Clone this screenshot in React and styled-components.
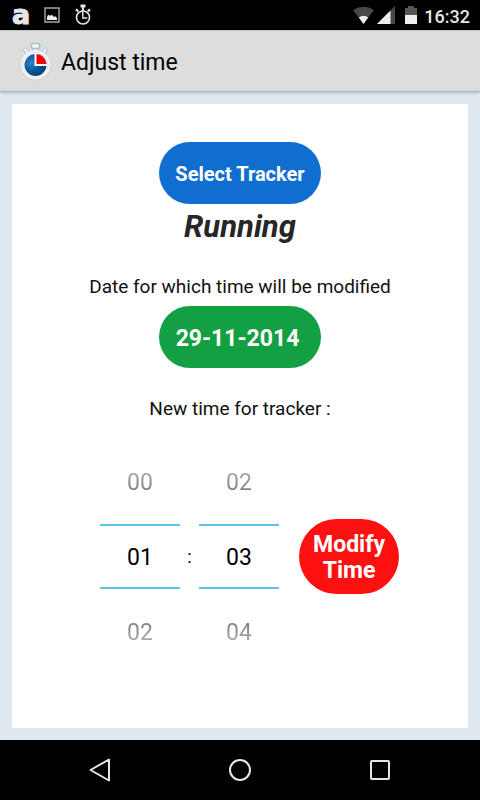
import React, { useState } from "react";
import styled, { createGlobalStyle } from "styled-components";

const GlobalStyle = createGlobalStyle`
  *, *::before, *::after { box-sizing: border-box; }
  body {
    margin: 0;
    font-family: Roboto, "Liberation Sans", sans-serif;
    color: #000;
    background: #deeaef;
  }
  button, input { font: inherit; color: inherit; margin: 0; padding: 0; border: 0; background: none; }
  button { cursor: pointer; }
  p, h1, h2 { margin: 0; }
`;

const Screen = styled.div`
  display: flex;
  flex-direction: column;
  min-height: 100vh;
  background: #deeaef;
`;

const StatusBar = styled.div`
  display: flex;
  align-items: center;
  justify-content: space-between;
  height: 30px;
  padding: 0 10px 0 12px;
  background: #000;
  color: #e6e6e6;
`;

const StatusGroup = styled.div`
  display: flex;
  align-items: center;
  svg { display: block; }
`;

const Notifications = styled(StatusGroup)`
  gap: 14px;
`;

const NotificationMark = styled.span`
  font: bold 27px/30px "DejaVu Sans", sans-serif;
  -webkit-text-stroke: 1px #e6e6e6;
`;

const Clock = styled.time`
  margin-left: 6px;
  padding-top: 3px;
  font-size: 18px;
  line-height: 24px;
  font-weight: 500;
`;

const AppBar = styled.header`
  display: flex;
  align-items: center;
  gap: 8px;
  height: 62px;
  padding: 2px 17px 0;
  background: #ddd;
  border-top: 1px solid #c4c4c4;
  border-bottom: 1px solid #b0b2b3;
  box-shadow: 0 1px 3px rgba(0, 0, 0, 0.2);
  svg { display: block; }
`;

const Title = styled.h1`
  padding-top: 2px;
  font-size: 23px;
  line-height: 28px;
  font-weight: 400;
`;

const Content = styled.main`
  display: flex;
  flex: 1;
  padding: 12px;
`;

const Card = styled.section`
  display: flex;
  flex: 1;
  flex-direction: column;
  align-items: center;
  padding: 38px 12px;
  background: #fff;
`;

const tones = { blue: "#106ed0", green: "#12a042", red: "#ff1010" };

const PillButton = styled.button`
  min-width: ${(p) => (p.$compact ? 100 : 162)}px;
  min-height: ${(p) => (p.$compact ? 75 : 62)}px;
  padding: ${(p) => (p.$date ? "4px 5px 0 0" : "2px 0 0")};
  border-radius: 38px;
  background: ${(p) => tones[p.$tone]};
  color: #fff;
  font-size: ${(p) => (p.$compact || p.$date ? 23 : 20)}px;
  line-height: 26px;
  font-weight: 700;
`;

const TrackerName = styled.h2`
  padding-top: 1px;
  margin-bottom: 26px;
  color: #262626;
  font-size: 31px;
  line-height: 44px;
  font-weight: 700;
  font-style: italic;
`;

const Label = styled.p`
  padding-bottom: 7px;
  color: #111;
  font-size: 19px;
  line-height: 24px;
  text-align: center;
`;

const TimeLabel = styled(Label)`
  margin-top: 29px;
`;

const TimeRow = styled.div`
  display: flex;
  align-items: center;
  margin-top: 16px;
  margin-left: 19px;
`;

const Picker = styled.div`
  display: flex;
  flex-direction: column;
  width: 80px;
  font-size: 23px;
  line-height: 28px;
  text-align: center;
`;

const PickerStep = styled.button`
  height: 80px;
  color: transparent;
  background: linear-gradient(${(p) => (p.$up ? "#aaa 35%, #737373 65%" : "#737373 35%, #aaa 65%")});
  background-clip: text;
  padding: ${(p) => (p.$up ? "0 0 2px" : "8px 0 0")};
`;

const PickerValue = styled.input`
  width: 100%;
  height: 65px;
  padding-top: 2px;
  border-top: 2px solid #5cc4ec;
  border-bottom: 2px solid #5cc4ec;
  border-radius: 0;
  text-align: center;
  outline: none;
`;

const Colon = styled.span`
  width: 19px;
  font-size: 18px;
  text-align: center;
`;

const ModifySlot = styled.div`
  margin-left: 20px;
`;

const NavBar = styled.nav`
  display: flex;
  justify-content: center;
  height: 60px;
  background: #000;
`;

const NavButton = styled.button`
  display: grid;
  place-items: center;
  width: 140px;
`;

const pad = (n) => String(n).padStart(2, "0");

function TimePicker({ label, value, max, onChange }) {
  const wrap = (n) => (n + max) % max;
  return (
    <Picker role="group" aria-label={label}>
      <PickerStep $up onClick={() => onChange(wrap(value - 1))}>{pad(wrap(value - 1))}</PickerStep>
      <PickerValue
        aria-label={label}
        inputMode="numeric"
        value={pad(value)}
        onChange={(e) => onChange(wrap(Number(e.target.value.replace(/\D/g, "").slice(-2))))}
      />
      <PickerStep onClick={() => onChange(wrap(value + 1))}>{pad(wrap(value + 1))}</PickerStep>
    </Picker>
  );
}

function PictureIcon() {
  return (
    <svg width="16" height="16" viewBox="0 0 16 16" aria-hidden="true">
      <path d="M1 1h14v14H1z" fill="none" stroke="#a8a8a8" strokeWidth="1.4" />
      <path d="M3 13V10l1-2h1l1 1 1-1h1l2 2 1-1 2 2v2z" fill="#eee" />
    </svg>
  );
}

function StopwatchIcon() {
  return (
    <svg width="18" height="22" viewBox="0 0 18 22" fill="none" stroke="#e6e6e6" aria-hidden="true">
      <circle cx="9" cy="13.5" r="6.5" strokeWidth="1.6" />
      <path d="M6.5 2h5" strokeWidth="3" />
      <path d="M9 3v4" strokeWidth="2" />
      <path d="M2 5.2l2.2 2.4M16 5.2l-2.2 2.4" strokeWidth="2.2" />
      <path d="M8.8 8v6h4.5" strokeWidth="1.4" />
    </svg>
  );
}

function SignalIcons() {
  return (
    <svg width="65" height="20" viewBox="0 0 65 20" aria-hidden="true">
      <path d="M0 5Q10.500-1.500 21 5L10.500 19z" fill="#484848" />
      <path d="M5.800 12.500Q10.500 9 15.200 12.500L10.500 19z" fill="#eee" />
      <path d="M24 19L42 1v18z" fill="#484848" />
      <path d="M24 19L37.500 5.500V19z" fill="#eee" />
      <path d="M52 3h3V1h6v2h3v16H52z" fill="#555" />
      <path d="M52 10h12v9H52z" fill="#eee" />
    </svg>
  );
}

function AppIcon() {
  return (
    <svg width="36" height="40" viewBox="0 0 36 40" aria-hidden="true">
      <defs>
        <radialGradient id="dial" cx="30%" cy="40%" r="75%">
          <stop offset="0" stopColor="#2f86c9" />
          <stop offset="0.55" stopColor="#075297" />
          <stop offset="1" stopColor="#033b76" />
        </radialGradient>
      </defs>
      <g stroke="#a7bed3" fill="#f3f7fa">
        <path d="M16 6h5v4h-5z" />
        <rect x="14.500" y="1.500" width="8" height="5" rx="1" strokeWidth="1.500" />
        <path d="M6.500 7.500l2-2 4 5-3 2zM30.500 7.500l-2-2-4 5 3 2z" />
      </g>
      <circle cx="18.500" cy="23.500" r="15" fill="#c8c8c8" />
      <circle cx="18.500" cy="23" r="14.500" fill="#fff" />
      <circle cx="18.500" cy="23" r="12.900" fill="none" stroke="#d3e0ea" strokeWidth="1" />
      <circle cx="18.500" cy="23" r="11" fill="url(#dial)" />
      <path d="M17.500 11.500A12 12 0 0 1 30 24H17.500z" fill="#fff" />
      <path d="M19.500 12A10.500 10.500 0 0 1 29.500 22H19.500z" fill="#f40000" />
    </svg>
  );
}

export default function App() {
  const [hours, setHours] = useState(1);
  const [minutes, setMinutes] = useState(3);

  return (
    <Screen>
      <GlobalStyle />
      <StatusBar>
        <Notifications>
          <NotificationMark>a</NotificationMark>
          <PictureIcon />
          <StopwatchIcon />
        </Notifications>
        <StatusGroup>
          <SignalIcons />
          <Clock>16:32</Clock>
        </StatusGroup>
      </StatusBar>

      <AppBar>
        <AppIcon />
        <Title>Adjust time</Title>
      </AppBar>

      <Content>
        <Card>
          <PillButton $tone="blue">Select Tracker</PillButton>
          <TrackerName>Running</TrackerName>
          <Label id="date-label">Date for which time will be modified</Label>
          <PillButton $tone="green" $date aria-describedby="date-label">29-11-2014</PillButton>
          <TimeLabel>New time for tracker :</TimeLabel>
          <TimeRow>
            <TimePicker label="Hours" value={hours} max={24} onChange={setHours} />
            <Colon>:</Colon>
            <TimePicker label="Minutes" value={minutes} max={60} onChange={setMinutes} />
            <ModifySlot>
              <PillButton $tone="red" $compact>Modify<br />Time</PillButton>
            </ModifySlot>
          </TimeRow>
        </Card>
      </Content>

      <NavBar>
        <NavButton aria-label="Back">
          <svg width="24" height="26" viewBox="0 0 24 26" aria-hidden="true">
            <path d="M2.500 13L21 2.500v21z" fill="none" stroke="#e6e6e6" strokeWidth="2" strokeLinejoin="round" />
          </svg>
        </NavButton>
        <NavButton aria-label="Home">
          <svg width="24" height="24" viewBox="0 0 24 24" aria-hidden="true">
            <circle cx="12" cy="12" r="10" fill="none" stroke="#e6e6e6" strokeWidth="2" />
          </svg>
        </NavButton>
        <NavButton aria-label="Recent apps">
          <svg width="20" height="20" viewBox="0 0 20 20" aria-hidden="true">
            <rect x="1" y="1" width="18" height="18" rx="1" fill="none" stroke="#e6e6e6" strokeWidth="2" />
          </svg>
        </NavButton>
      </NavBar>
    </Screen>
  );
}
